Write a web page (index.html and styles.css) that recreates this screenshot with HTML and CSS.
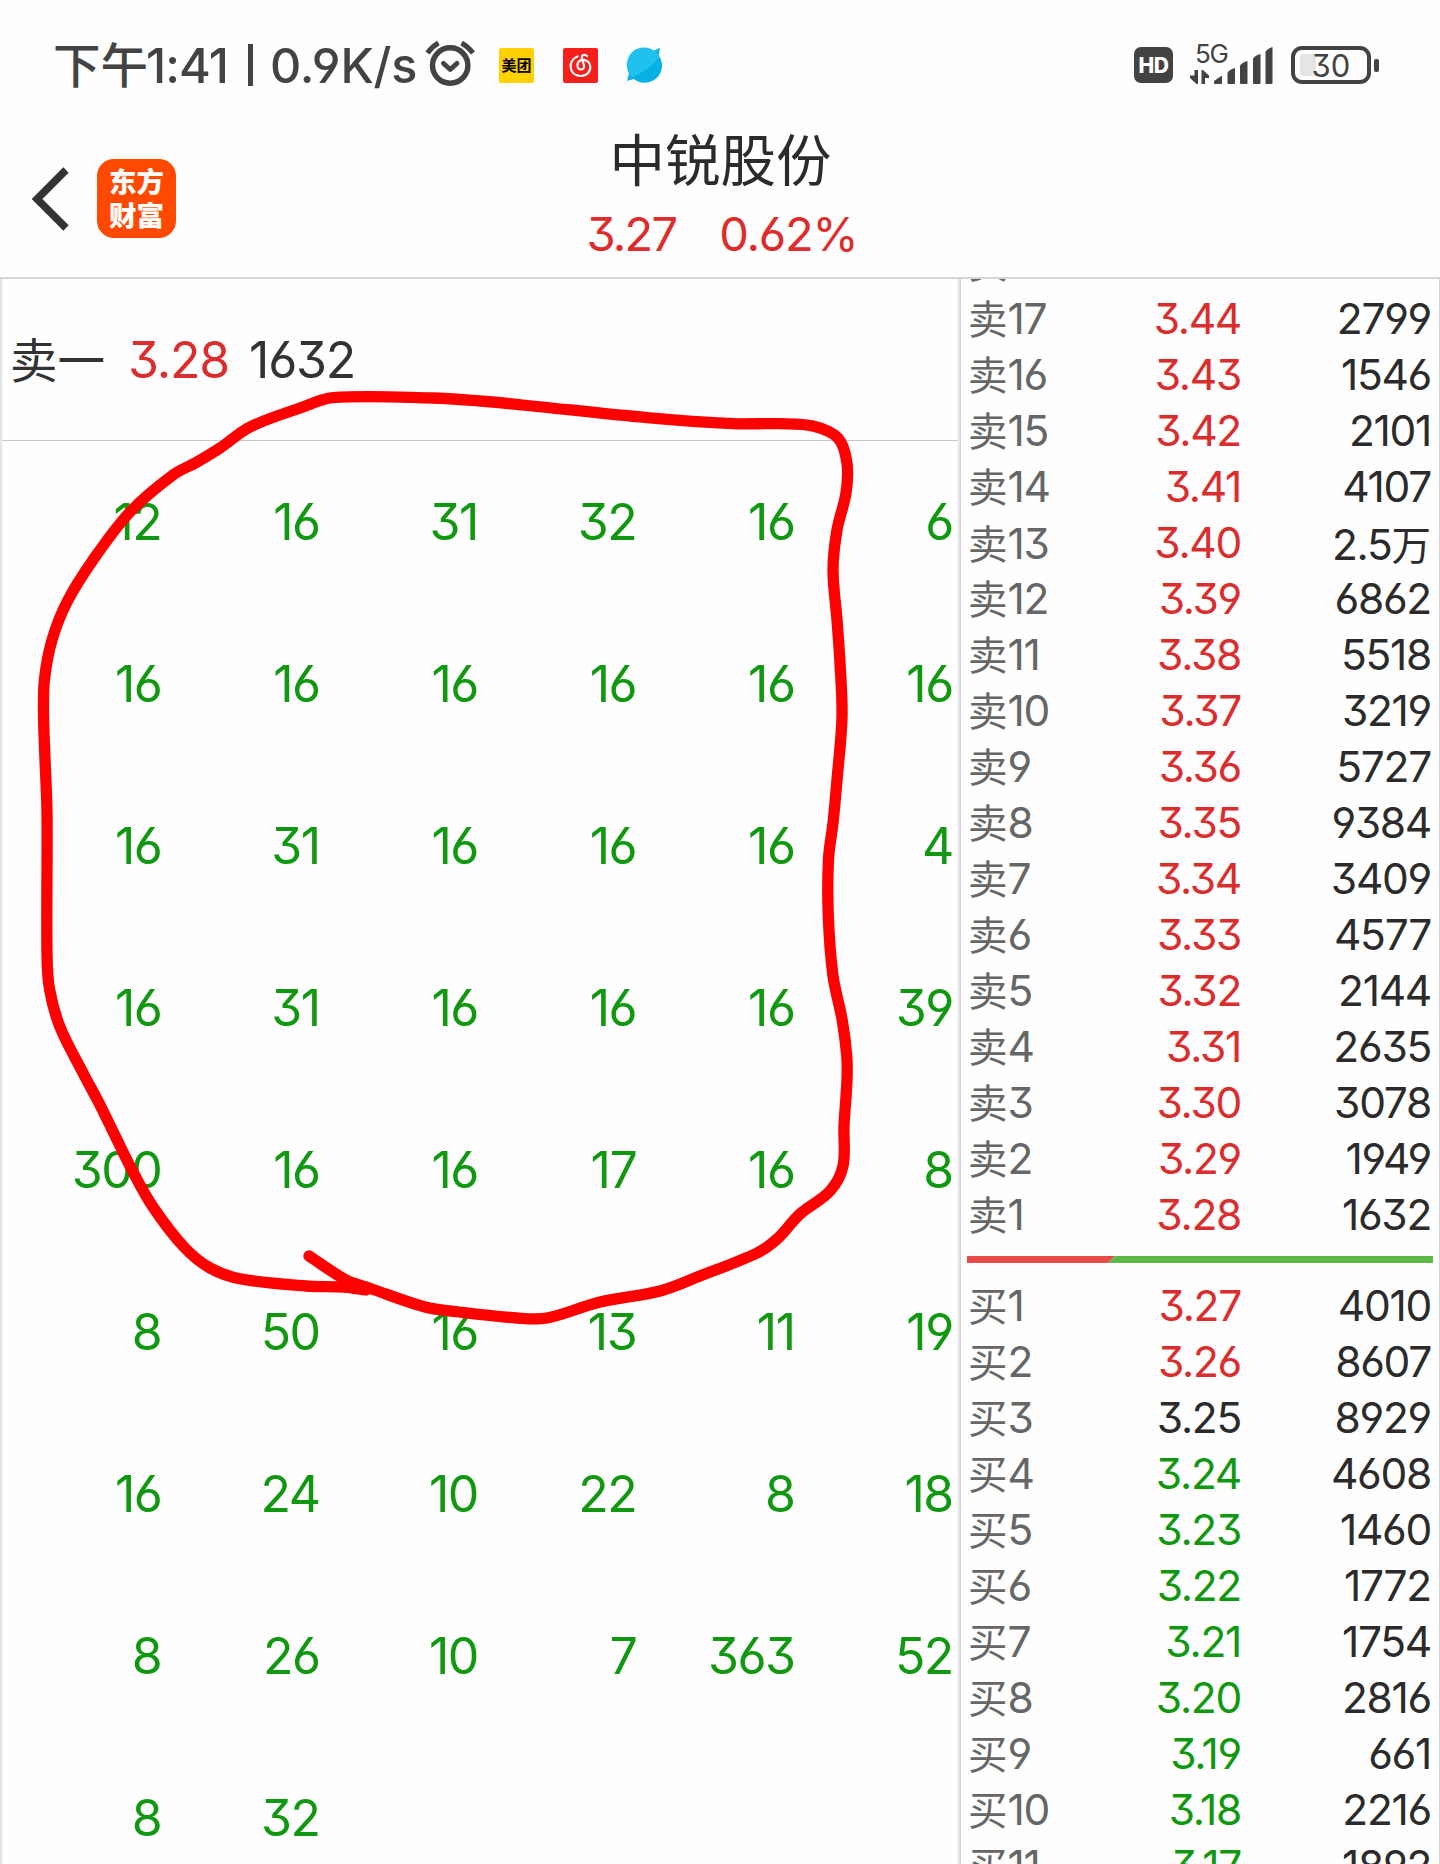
FILE: index.html
```html
<!DOCTYPE html>
<html lang="zh-CN">
<head>
<meta charset="utf-8">
<title>中锐股份</title>
<link rel="stylesheet" href="styles.css">
</head>
<body>
<div class="screen">
  <div class="status">
    <div class="clock"><span class="cjk">下午</span><span class="time">1:41</span><span class="sep"></span><span class="speed">0.9K/s</span></div>
    <svg class="alarm" width="50" height="46" viewBox="0 0 50 46" fill="none" stroke="#434343">
      <circle cx="25.200" cy="25.500" r="17.700" stroke-width="5.400"/>
      <path d="M18.500 23.500l6.700 6 6.700-6" stroke-width="5" stroke-linecap="round" stroke-linejoin="round"/>
      <path d="M2.500 13Q7 6.500 13.500 3M36.500 3Q43 6.500 48 13" stroke-width="5"/>
    </svg>
    <div class="meituan">美团</div>
    <svg class="music" width="35" height="35" viewBox="0 0 35 35">
      <rect width="35" height="35" rx="2" fill="#f5201c"/>
      <path d="M14.500 8.500C5 12 5 27 17 28c11 0 13.500-12 6-15.500-5-2-9 1-8.500 5.500.5 5 7.500 4.500 6.500-.5L19 10.500c-.8-4 3-4.500 5-2.500" fill="none" stroke="#fff" stroke-width="2.200" stroke-linecap="round"/>
    </svg>
    <svg class="planet" width="36" height="36" viewBox="0 0 36 36">
      <path d="M27 4L34 .8 32.500 10zM3 26L1 34l8-2.500z" fill="#15b2e2"/>
      <circle cx="18" cy="17.800" r="17.300" fill="#20c1ee"/>
      <path d="M33.500 9.500A17.300 17.300 0 0 1 6 30.200Q22 24 33.500 9.500z" fill="#08b1e5"/>
    </svg>
    <div class="hd">HD</div>
    <div class="signal">
      <span class="net">5G</span>
      <svg width="84" height="44" viewBox="0 0 84 44" fill="#434343">
        <path d="M5.500 27H9v14H7.500L1 35v-2.500h4.500zM12.500 27H14l6 5.500V35h-4v6h-3.500z"/>
        <path d="M25 38l8-5.500V40a1 1 0 0 1-1 1h-6a1 1 0 0 1-1-1zM38.500 30q1-3 7.500-5v15a1 1 0 0 1-1 1h-5.500a1 1 0 0 1-1-1zM51 23q1-3 7.500-5v22a1 1 0 0 1-1 1H52a1 1 0 0 1-1-1zM64 16q1-3 7.500-5v29a1 1 0 0 1-1 1H65a1 1 0 0 1-1-1zM76.500 9q1-3 7-5v36a1 1 0 0 1-1 1h-5a1 1 0 0 1-1-1z"/>
      </svg>
    </div>
    <div class="battery"><span class="level"></span><span class="pct">30</span></div>
    <span class="tip"></span>
  </div>

  <div class="header">
    <svg class="back" width="38" height="64" viewBox="0 0 38 64" fill="none" stroke="#333" stroke-width="7.500"><path d="M35 3L6 32l29 29"/></svg>
    <div class="logo"><span>东方</span><span>财富</span></div>
    <div class="heading">
      <div class="name">中锐股份</div>
      <div class="quote"><span>3.27</span><span>0.62%</span></div>
    </div>
  </div>

  <div class="main">
    <div class="queue">
      <div class="best"><span class="cjk">卖一</span><span class="price">3.28</span><span>1632</span></div>
      <div class="grid" id="grid"></div>
      <svg class="mark" width="960" height="1586" viewBox="0 278 960 1586"><path id="mark"/></svg>
    </div>
    <div class="book">
      <div class="asks" id="asks"></div>
      <svg class="ratio" width="466" height="7" viewBox="0 0 466 7"><path fill="#e84c4a" d="M0 0h148l-7 7H0z"/><path fill="#5fb84a" d="M148 0h318v7H141z"/></svg>
      <div class="bids" id="bids"></div>
    </div>
  </div>
</div>
<script src="app.js"></script>
</body>
</html>
```
FILE: styles.css
```css
* { box-sizing: border-box; }
body { margin: 0; background: #fefefe; }
.screen {
  width: 1440px; height: 1864px; overflow: hidden;
  display: flex; flex-direction: column;
  font-family: Inter, "Noto Sans CJK SC", sans-serif;
  font-feature-settings: "cv03", "cv04", "cv09";
  color: #2b2b2b; white-space: nowrap;
}
.cjk { font-family: "Noto Sans CJK SC", sans-serif; letter-spacing: 0; }

.status { height: 130px; display: flex; align-items: center; padding-left: 53px; color: #434343; flex: none; }
.clock { display: flex; align-items: center; width: 371px; font-size: 48.500px; font-weight: 500; letter-spacing: -1.200px; }
.clock .cjk { font-size: 47.500px; width: 93px; margin-top: -5px; }
.time { width: 102px; letter-spacing: -.9px; }
.sep { width: 5px; height: 42px; margin-right: 17px; background: #434343; }
.speed { letter-spacing: -.2px; }
.alarm { margin: -5px 0 0 1px; flex: none; }
.meituan {
  width: 35px; height: 35px; margin-left: 24px; border-radius: 2px; background: #ffd100; color: #000;
  font: 700 15px/34px "Noto Sans CJK SC", sans-serif; text-align: center;
}
.music { margin-left: 29px; }
.planet { margin-left: 28px; }
.hd {
  width: 39px; height: 36px; margin-left: 472px; border-radius: 7px; background: #434343; color: #fff;
  font-size: 21px; font-weight: 800; line-height: 37px; text-align: center; letter-spacing: -.5px;
}
.signal { position: relative; width: 84px; height: 44px; margin-left: 16px; }
.signal svg { display: block; }
.net { position: absolute; left: 6px; top: -4px; font-size: 26px; line-height: 30px; letter-spacing: -1.300px; }
.battery {
  position: relative; width: 80px; height: 38px; margin-left: 18px; border: 4px solid #434343; border-radius: 11px;
  font-size: 31px; line-height: 31px; text-align: center;
}
.level { position: absolute; left: 5px; top: 4px; width: 16px; height: 22px; border-radius: 4px; background: #e5e5e5; }
.pct { position: relative; }
.tip { width: 5px; height: 13px; margin-left: 3px; border-radius: 2px; background: #434343; }

.header { position: relative; height: 147px; flex: none; display: flex; align-items: flex-start; padding-left: 31px; }
.back { margin-top: 37px; }
.logo {
  width: 79px; height: 79px; margin: 29px 0 0 28px; padding-top: 4px; border-radius: 17px; background: #ff4800; color: #fff;
  display: flex; flex-direction: column; align-items: center;
  font: 900 27.500px/34px "Noto Sans CJK SC", sans-serif;
}
.heading { flex: 1; margin-right: 175px; display: flex; flex-direction: column; align-items: center; }
.name { margin-top: -5px; font: 400 55.500px/64px "Noto Sans CJK SC", sans-serif; }
.quote { display: flex; gap: 43px; margin: 17px 0 0 3px; font-size: 47px; line-height: 56px; letter-spacing: -1.800px; color: #de2b2b; }
.quote span + span { letter-spacing: -1.200px; }

.main { flex: 1; display: flex; min-height: 0; border-top: 2px solid #d6d6da; }
.queue { position: relative; width: 960px; border-left: 2px solid #e4e4e4; border-right: 2px solid #e4e4e8; }
.best { height: 162px; display: flex; align-items: center; padding-left: 8px; border-bottom: 1px solid #c8c8c8; font-size: 50px; letter-spacing: -1.200px; color: #333; }
.best .cjk { font-size: 47.500px; width: 118px; margin-top: -5px; }
.best .price { width: 121px; }
.price, .up { color: #db2d2d; }
.grid { display: grid; grid-template-columns: repeat(6, 158.300px); grid-auto-rows: 162px; margin-left: 1px; }
.grid span { font-size: 50px; line-height: 163px; text-align: right; letter-spacing: -1.500px; padding-right: 0; color: #109810; }
.mark { position: absolute; left: -2px; top: -1px; }
.mark path { fill: none; stroke: #f00; stroke-width: 11.300px; stroke-linecap: round; stroke-linejoin: round; }

.book { width: 480px; overflow: hidden; border-left: 1px solid #d6d6da; border-right: 1px solid #d6d6da; }
.asks { margin-top: -44px; }
.row { display: grid; grid-template-columns: 91px 182px 190px; height: 56px; padding-left: 7px; font-size: 42.500px; line-height: 56px; letter-spacing: -1.300px; }
.row span { text-align: right; }
.row .label { text-align: left; color: #666; display: flex; align-items: center; }
.row .cjk { font-size: 39.500px; }
.row .label .cjk { margin-top: -4px; }
.down { color: #109810; }
.ratio { display: block; margin: 13px 0 15px 6px; }
```
FILE: app.js
```js
const orders = [
  [12, 16, 31, 32, 16, 6],
  [16, 16, 16, 16, 16, 16],
  [16, 31, 16, 16, 16, 4],
  [16, 31, 16, 16, 16, 39],
  [300, 16, 16, 17, 16, 8],
  [8, 50, 16, 13, 11, 19],
  [16, 24, 10, 22, 8, 18],
  [8, 26, 10, 7, 363, 52],
  [8, 32],
];
document.getElementById('grid').innerHTML = orders.flat().map(n => `<span>${n}</span>`).join('');

const row = (side, level, price, volume) => {
  const tone = price > 3.25 ? 'up' : price < 3.25 ? 'down' : '';
  const vol = String(volume).replace('万', '<span class="cjk">万</span>');
  return `<div class="row"><span class="label"><span class="cjk">${side}</span>${level}</span>` +
    `<span class="${tone}">${price.toFixed(2)}</span><span>${vol}</span></div>`;
};
const asks = ['', 2799, 1546, 2101, 4107, '2.5万', 6862, 5518, 3219, 5727, 9384, 3409, 4577, 2144, 2635, 3078, 1949, 1632];
const bids = [4010, 8607, 8929, 4608, 1460, 1772, 1754, 2816, 661, 2216, 1892];
document.getElementById('asks').innerHTML = asks.map((v, i) => row('卖', 18 - i, (345 - i) / 100, v)).join('');
document.getElementById('bids').innerHTML = bids.map((v, i) => row('买', i + 1, (327 - i) / 100, v)).join('');

// Freehand annotation, smoothed through its sample points
const pts = [
  [309,1256],[346,1280],[369,1288],[425,1307],[459,1312],[517,1318],[547,1318],[600,1302],[660,1291],[700,1276],
  [757,1253],[777,1239],[800,1214],[830,1191],[843,1166],[844,1126],[847,1080],[846.7,1055],[842,1019],[833,976],
  [828.3,916],[828.5,859],[833,823],[837,780],[842,717],[840,663],[837,620],[833,570],[837,530],[846,493],
  [847,463],[838,438],[813,426],[780,423.7],[733,423.7],[647,417.7],[523,405],[480,401],[433,398],[333,397.7],
  [300,408],[250,427],[220,448],[197,462],[173,475],[130,512],[93,560],[67,602],[52,640],[44.5,679],[43.5,713],
  [45,759],[47,813],[47,954],[49.5,989],[60,1027],[83,1073],[100,1105],[132,1170],
  [153,1207],[184,1247],[210,1268],[241,1279],[306,1286],[344,1287],[366,1290],
];
let d = `M${pts[0]}`;
for (let i = 0; i < pts.length - 1; i++) {
  const a = pts[i - 1] || pts[i], b = pts[i], c = pts[i + 1], e = pts[i + 2] || c;
  const len = Math.hypot(c[0] - b[0], c[1] - b[1]);
  const ctl = (p, from, to, s) => {
    const t = Math.hypot(to[0] - from[0], to[1] - from[1]);
    return [p[0] + s * (to[0] - from[0]) / t * len / 3, p[1] + s * (to[1] - from[1]) / t * len / 3];
  };
  d += `C${ctl(b, a, c, 1)} ${ctl(c, b, e, -1)} ${c}`;
}
document.getElementById('mark').setAttribute('d', d);
```
